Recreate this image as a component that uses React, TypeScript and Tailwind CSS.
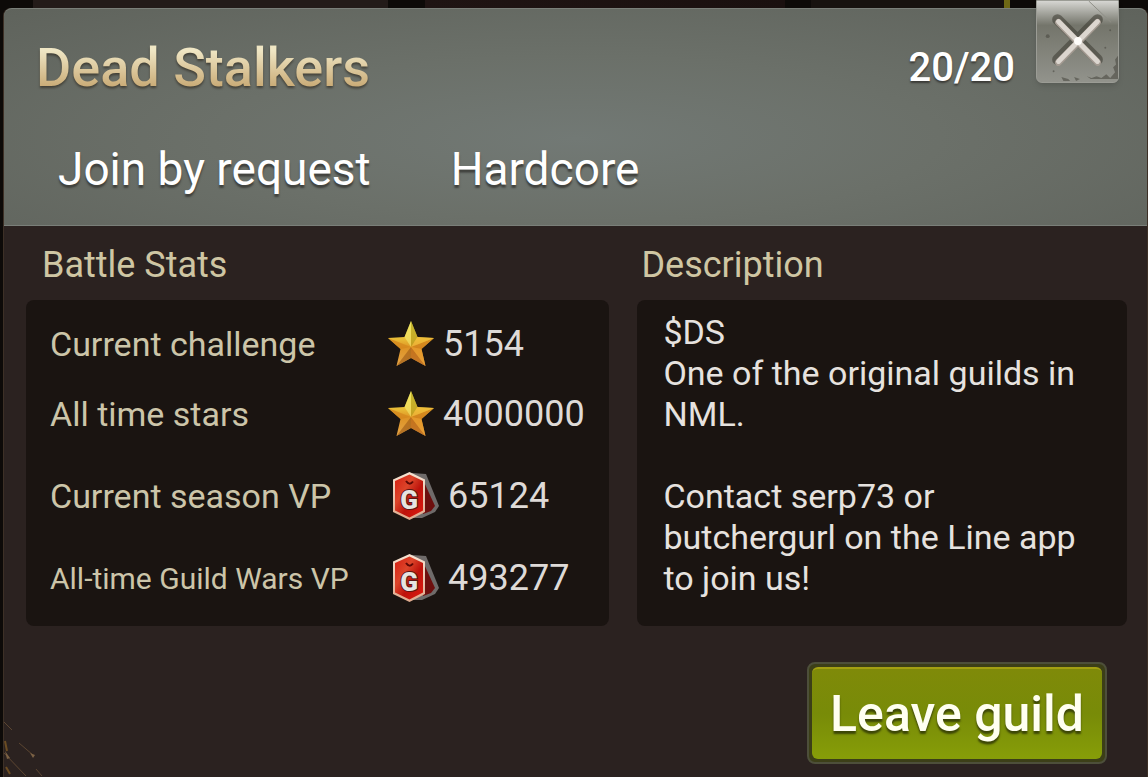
import React from "react";

type IconKind = "star" | "badge";

interface Stat {
  label: string;
  labelSize: string;
  value: string;
  icon: IconKind;
}

const challengeStats: Stat[] = [
  { label: "Current challenge", labelSize: "text-[34px]", value: "5154", icon: "star" },
  { label: "All time stars", labelSize: "text-[34px]", value: "4000000", icon: "star" },
];

// Longer labels step down in size so they stay clear of the icon column
const seasonStats: Stat[] = [
  { label: "Current season VP", labelSize: "text-[34px]", value: "65124", icon: "badge" },
  { label: "All-time Guild Wars VP", labelSize: "text-[30px]", value: "493277", icon: "badge" },
];

const description = `$DS
One of the original guilds in NML.

Contact serp73 or butchergurl on the Line app to join us!`;

// Faceted gold star, each arm split into a lit and a shaded half
const StarIcon = () => (
  <svg viewBox="0 0 48 48" className="h-12 w-12 shrink-0" aria-hidden="true">
    <defs>
      <linearGradient id="starBase" x1="0" y1="0" x2="0" y2="1">
        <stop offset="0" stopColor="#e6dc4c" />
        <stop offset="0.4" stopColor="#e9bd36" />
        <stop offset="0.6" stopColor="#dd9325" />
        <stop offset="1" stopColor="#e5a548" />
      </linearGradient>
    </defs>
    <path d="M24 1 30.500 17 47 18 34.500 29 38.500 46 24 38 9.500 46 13.500 29 1 18 17.500 17Z" fill="url(#starBase)" />
    <path d="M24 1 30.500 17 24 27Z" fill="#a99a1a" opacity="0.55" />
    <path d="M24 1 17.500 17 24 27Z" fill="#f4ee76" opacity="0.55" />
    <path d="M1 18 13.500 29 24 27Z" fill="#d4861c" opacity="0.75" />
    <path d="M47 18 34.500 29 24 27Z" fill="#cf7f1b" opacity="0.75" />
    <path d="M47 18 30.500 17 24 27Z" fill="#f2bd3c" opacity="0.6" />
    <path d="M9.500 46 24 38V27Z" fill="#a4611a" opacity="0.7" />
    <path d="M38.500 46 24 38V27Z" fill="#b9651a" opacity="0.7" />
    <path d="M38.500 46 34.500 29 24 27Z" fill="#e79a2c" opacity="0.7" />
  </svg>
);

// Red dog tag with a second tag behind it
const BadgeIcon = () => (
  <svg viewBox="0 0 48 50" className="ml-[5px] h-[50px] w-12 shrink-0" aria-hidden="true">
    <defs>
      <linearGradient id="tagRed" x1="0" y1="0" x2="1" y2="1">
        <stop offset="0" stopColor="#d51c10" />
        <stop offset="0.35" stopColor="#dc452a" />
        <stop offset="0.6" stopColor="#bd120b" />
        <stop offset="1" stopColor="#e01a10" />
      </linearGradient>
      <linearGradient id="tagRim" x1="0" y1="0" x2="0" y2="1">
        <stop offset="0" stopColor="#f6e3d2" />
        <stop offset="1" stopColor="#dfa98c" />
      </linearGradient>
    </defs>
    <path d="M20 2 34 3 47 35 43 41 30 47 20 47Z" fill="#6f6b6a" />
    <path d="M32 11 43 35 39 40 31 43Z" fill="#6d0f0e" />
    <path d="M17.500 1 33 8.500V41L17.500 49 1 41V8.500Z" fill="url(#tagRim)" />
    <path d="M17.500 3.500 31 10V39.500L17.500 46.500 3 39.500V10Z" fill="url(#tagRed)" />
    <path d="M14 10Q17.500 15 21 10.500" fill="none" stroke="#5e0805" strokeWidth="2" />
    <text x="17" y="38" textAnchor="middle" className="fill-[#e6e4e1] stroke-[#5a1714] stroke-2 font-['Roboto','Liberation_Sans',sans-serif] text-[26px] font-black [paint-order:stroke]">
      G
    </text>
  </svg>
);

const CloseIcon = () => (
  <svg viewBox="0 0 83 83" className="h-full w-full" aria-hidden="true">
    <g fill="#4b4a42" opacity="0.6">
      <path d="M83 56 80 60 81 65 78 68 80 73 75 79 71 75 66 79 61 77 56 79 51 77 55 80 83 80ZM25 78 32 80 34 82H27ZM38 78 44 80 40 82Z" />
      <circle cx="11" cy="36" r="2" />
      <circle cx="17" cy="72" r="1" />
      <circle cx="70" cy="48" r="1" />
      <circle cx="75" cy="30" r="1" />
    </g>
    <path d="M53 0 76 22" stroke="#8e8e86" strokeWidth="1" />
    <g strokeLinecap="round" fill="none">
      <path d="M21 19 62 60M62 19 21 60" stroke="#3b382f" strokeWidth="11" opacity="0.55" />
      <path d="M22 22 62 63M62 22 22 63" stroke="#a39a91" strokeWidth="7" />
      <path d="M22 21 62 62M62 21 22 62" stroke="#dcd6cf" strokeWidth="5" />
    </g>
    <circle cx="42" cy="41" r="4" fill="#fffdfa" />
  </svg>
);

// Worn, cracked paint in the lower left corner of the panel
const CornerScratches = () => (
  <svg viewBox="0 0 44 60" className="pointer-events-none absolute bottom-0 left-0 h-[60px] w-11" fill="none" aria-hidden="true">
    <path d="M0 5 8 13M15 26 29 38M0 36 22 59M32 52 38 59" stroke="#5c4631" strokeWidth="1" />
    <path d="M26 36 31 38 29 41ZM1 34 6 41 3 42Z" fill="#7b6144" />
    <path d="M1 24 3 34M2 50 6 57" stroke="#6b4c22" strokeWidth="2" />
  </svg>
);

const StatRow = ({ label, labelSize, value, icon }: Stat) => (
  <div className="flex h-16 items-center">
    <dt className={`w-[337px] shrink-0 whitespace-nowrap text-[#ccc5a9] ${labelSize}`}>{label}</dt>
    <dd className="flex items-center gap-2 text-[#dedad7]">
      {icon === "star" ? <StarIcon /> : <BadgeIcon />}
      {value}
    </dd>
  </div>
);

export default function App() {
  return (
    <div className="flex min-h-screen flex-col bg-[#14100c] bg-[linear-gradient(90deg,#0d0a08_33px,#231b19_33px,#231b19_388px,#0d0a08_388px,#0d0a08_425px,#1f1413_425px,#1a100f_785px,#0d0a08_785px,#0d0a08_811px,#17120f_811px,#17120f_1004px,#6e6815_1004px,#6e6815_1010px,#0d0a08_1010px)] pt-2 pl-[3px] font-['Roboto','Liberation_Sans',sans-serif]">
      <main className="relative flex flex-1 flex-col rounded-t-lg border-x border-[#3d3026] bg-[#2b2220]">
        <header className="rounded-t-lg border-y border-[#7a7f79] bg-[#666a63] bg-[radial-gradient(ellipse_at_50%_60%,#727975_0%,#6b7069_45%,#5f635c_100%)] px-8 pt-6 pb-6">
          <div className="flex items-center justify-between pr-[100px]">
            <h1 className="bg-linear-to-b from-[#efe6c4] from-25% to-[#c7a872] to-80% bg-clip-text text-[54px] leading-[70px] font-medium text-transparent drop-shadow-[0_2px_1px_rgba(50,45,35,0.7)]">
              Dead Stalkers
            </h1>
            <span className="text-[40px] leading-[70px] font-medium text-white [text-shadow:0_2px_2px_#3a3a36]">20/20</span>
          </div>
          <div className="mt-[34px] flex gap-20 pl-[22px] text-[46px] leading-[64px] text-white [text-shadow:0_3px_2px_#3f403c]">
            <span>Join by request</span>
            <span>Hardcore</span>
          </div>
        </header>

        <button
          type="button"
          aria-label="Close"
          className="absolute -top-2 right-7 h-[83px] w-[83px] rounded-b-md border border-[#9b9c95] bg-linear-to-b from-[#d6d6d2] via-[#74756b] via-30% to-[#92938c] shadow-md"
        >
          <CloseIcon />
        </button>

        <div className="grid grid-cols-[584fr_490fr] gap-7 pr-5 pl-[22px]">
          <section>
            <h2 className="px-4 pt-[14px] pb-[10px] text-[36px] leading-[50px] text-[#cfc6a3]">Battle Stats</h2>
            <dl className="flex h-[326px] flex-col gap-[18px] rounded-lg bg-[#1a1411] py-3 pr-4 pl-6 text-[36px]">
              <div className="flex flex-col gap-[6px]">
                {challengeStats.map((stat) => (
                  <StatRow key={stat.label} {...stat} />
                ))}
              </div>
              <div className="flex flex-col gap-[18px]">
                {seasonStats.map((stat) => (
                  <StatRow key={stat.label} {...stat} />
                ))}
              </div>
            </dl>
          </section>
          <section>
            <h2 className="px-1 pt-[14px] pb-[10px] text-[36px] leading-[50px] text-[#cfc6a3]">Description</h2>
            <p className="h-[326px] rounded-lg bg-[#1a1411] px-[26px] py-3 text-[34px] leading-[41px] whitespace-pre-line text-[#e6e2df]">
              {description}
            </p>
          </section>
        </div>

        <div className="mt-9 flex justify-end pr-10 pb-3">
          <button
            type="button"
            className="rounded-lg border-2 border-[#4d4f3a] bg-[#3c3f18] p-[3px] text-[50px] leading-[90px] font-medium text-[#fffff0] [text-shadow:0_3px_2px_#3c4606]"
          >
            <span className="block rounded-md border-t-2 border-[#a3a012] bg-linear-to-b from-[#7f8a09] via-[#788b08] to-[#879e08] px-[18px]">
              Leave guild
            </span>
          </button>
        </div>
        <CornerScratches />
      </main>
    </div>
  );
}
